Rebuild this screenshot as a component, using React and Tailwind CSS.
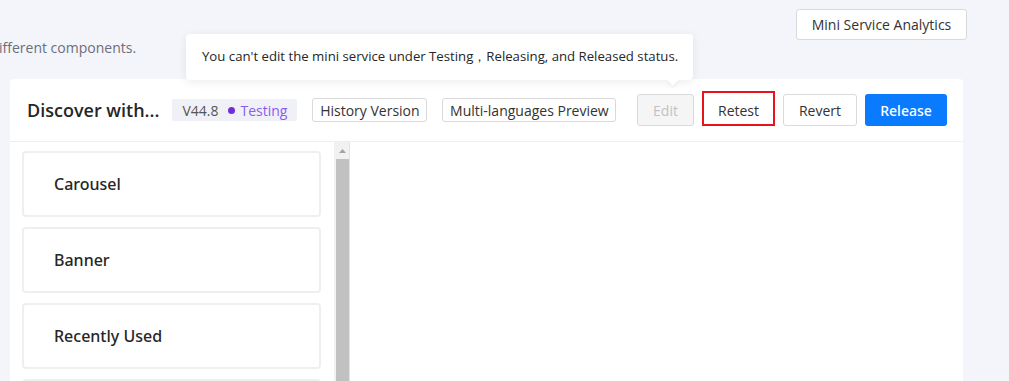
import React from 'react';

const components = ['Carousel', 'Banner', 'Recently Used', ''];

const OutlineButton = ({ children, className = '' }) => (
  <button
    className={`flex items-center justify-center whitespace-nowrap rounded-[3px] border border-[#d9d9d9] bg-white text-[14px] text-[#333] ${className}`}
  >
    {children}
  </button>
);

export default function App() {
  return (
    <div
      className="relative h-[381px] w-full overflow-hidden bg-[#f3f5fa]"
      style={{ fontFamily: '"Open Sans", "Noto Sans", sans-serif' }}
    >
      {/* top bar */}
      <div className="flex h-[79px] items-start justify-between pr-[42px] pt-[9px]">
        <p className="ml-[-1px] mt-[28px] text-[14px] text-[#6b6f7a]">ifferent components.</p>
        <OutlineButton className="h-[31px] w-[171px] text-[#333]">Mini Service Analytics</OutlineButton>
      </div>

      {/* tooltip */}
      <div className="absolute left-[186px] top-[34px] z-10 flex h-[46px] w-[507px] items-center whitespace-nowrap rounded-[4px] bg-white pl-[16px] text-[13.2px] text-[#262626] shadow-[0_2px_10px_rgba(0,0,0,0.08)]">
        You can't edit the mini service under Testing，Releasing, and Released status.
        <span className="absolute bottom-[-4px] left-[483px] h-[8px] w-[8px] rotate-45 bg-white shadow-[2px_2px_4px_rgba(0,0,0,0.05)]" />
      </div>

      {/* card */}
      <div className="ml-[10px] mr-[46px] flex h-[302px] flex-col rounded-t-[4px] bg-white">
        <div className="flex h-[63px] shrink-0 items-center border-b border-[#eeeeee] pl-[17px] pr-[16px]">
          <h2 className="whitespace-nowrap text-[18px] font-semibold text-[#262626]">Discover with...</h2>
          <div className="ml-[13px] flex h-[22px] items-center rounded-[2px] bg-[#f0f1f6] px-[10px] text-[14px]">
            <span className="text-[#555]">V44.8</span>
            <span className="ml-[10px] mr-[5px] h-[7px] w-[7px] rounded-full bg-[#6f2fd6]" />
            <span className="text-[#8a5cf0]">Testing</span>
          </div>
          <OutlineButton className="ml-[15px] h-[24px] w-[115px]">History Version</OutlineButton>
          <OutlineButton className="ml-[15px] h-[24px] w-[174px]">Multi-languages Preview</OutlineButton>
          <div className="flex-1" />
          <button className="flex h-[32px] w-[57px] items-center justify-center rounded-[3px] border border-[#d9d9d9] bg-[#f5f5f5] text-[14px] text-[#c2c2c2]">
            Edit
          </button>
          <button className="mb-[3px] ml-[8px] flex h-[35px] w-[73px] items-center justify-center border-2 border-[#e8141b] bg-white pt-[3px] text-[14px] text-[#333]">
            Retest
          </button>
          <OutlineButton className="ml-[8px] h-[32px] w-[74px]">Revert</OutlineButton>
          <button className="ml-[8px] flex h-[32px] w-[82px] items-center justify-center rounded-[3px] bg-[#0a7aff] font-['Noto_Sans'] text-[14px] font-medium text-white">
            Release
          </button>
        </div>

        <div className="flex min-h-0 flex-1">
          <div className="flex w-[324px] flex-col gap-[10px] overflow-hidden pl-[12px] pr-[13px] pt-[9px]">
            {components.map((name, i) => (
              <div
                key={i}
                className="flex h-[66px] shrink-0 items-center rounded-[4px] border-2 border-[#efefef] pl-[30px] font-['Noto_Sans'] text-[16px] font-medium text-[#262626]"
              >
                {name}
              </div>
            ))}
          </div>
          {/* scrollbar */}
          <div className="flex w-[15px] flex-col bg-[#f1f1f1] pl-[2px]">
            <div className="flex h-[17px] items-center justify-center">
              <svg width="7" height="4" viewBox="0 0 7 4">
                <path d="M3.5 0L7 4H0z" fill="#a3a3a3" />
              </svg>
            </div>
            <div className="flex-1 bg-[#c1c1c1]" />
          </div>
          <div className="flex-1 border-l border-[#e3e3e3]" />
        </div>
      </div>
    </div>
  );
}
